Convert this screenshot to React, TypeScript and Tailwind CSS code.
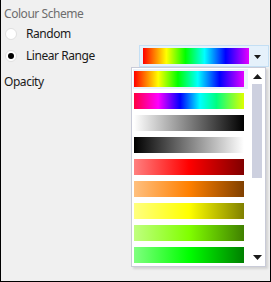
import React from "react";

const gradients: string[] = [
  "linear-gradient(to right, #ff0000 0%, #ffff00 22%, #00ff00 40%, #00ffff 58%, #0000ff 78%, #e600ff 100%)",
  "linear-gradient(to right, #ff0040 0%, #ff00ff 22%, #0000ff 42%, #00ffff 60%, #00ff80 75%, #ddff00 100%)",
  "linear-gradient(to right, #ffffff 0%, #000000 100%)",
  "linear-gradient(to right, #000000 0%, #ffffff 100%)",
  "linear-gradient(to right, #ff8080 0%, #ff0000 50%, #800000 100%)",
  "linear-gradient(to right, #ffc080 0%, #ff8000 50%, #804000 100%)",
  "linear-gradient(to right, #ffff80 0%, #ffff00 50%, #808000 100%)",
  "linear-gradient(to right, #c0ff80 0%, #80ff00 50%, #408000 100%)",
  "linear-gradient(to right, #80ff80 0%, #00ff00 50%, #008000 100%)",
];

function Radio({ checked }: { checked?: boolean }) {
  return (
    <div className="w-[12px] h-[12px] rounded-full bg-white border border-[#e0e0e0] flex items-center justify-center">
      {checked && <div className="w-[6px] h-[6px] rounded-full bg-black" />}
    </div>
  );
}

function TriDown({ w, h }: { w: number; h: number }) {
  return (
    <svg width={w} height={h} viewBox={`0 0 ${w} ${h}`}>
      <polygon points={`0,0 ${w},0 ${w / 2},${h}`} fill="#1a1a1a" />
    </svg>
  );
}
function TriUp({ w, h }: { w: number; h: number }) {
  return (
    <svg width={w} height={h} viewBox={`0 0 ${w} ${h}`}>
      <polygon points={`0,${h} ${w},${h} ${w / 2},0`} fill="#1a1a1a" />
    </svg>
  );
}

export default function App() {
  return (
    <div
      className="relative w-[271px] h-[282px] bg-[#f0f0f0] border-l border-r border-b border-black text-[12px] leading-[16px] tracking-[-0.45px] text-[#1a1a1a]"
      style={{ fontFamily: '"Noto Sans", "Open Sans", sans-serif' }}
    >
      <div className="flex flex-col pt-[6px]">
        <div className="pl-[3px] text-[#6d6d6d]">Colour Scheme</div>
        <div className="h-[22px] mt-[1px] flex items-center pl-[4px] gap-[9px]">
          <Radio />
          <span>Random</span>
        </div>
        <div className="h-[22px] flex items-center justify-between pl-[4px] pr-[1px]">
          <div className="flex items-center gap-[9px]">
            <Radio checked />
            <span>Linear Range</span>
          </div>
          <div className="w-[130px] h-[22px] border border-[#c4dff4] bg-[#e5f1fb] flex items-center pl-[3px] pr-[4px]">
            <div className="w-[106px] h-[16px]" style={{ background: gradients[0] }} />
            <div className="flex-1 flex justify-center pt-[1px] pl-[2px]">
              <TriDown w={7} h={4} />
            </div>
          </div>
        </div>
        <div className="pl-[3px] mt-[7px]">Opacity</div>
      </div>

      <div className="absolute left-[130px] top-[67px] w-[135px] h-[200px] bg-white border border-[#c9cbd8] shadow-[2px_2px_2px_rgba(0,0,0,0.12)] flex">
        <div className="w-[117px] flex flex-col">
          {gradients.map((g, i) => (
            <div
              key={i}
              className={
                "h-[20px] my-[1px] mx-[1px] pl-[1px] flex items-center " +
                (i === 0 ? "bg-[#eaf3fb]" : "")
              }
            >
              <div className="w-[110px] h-[16px]" style={{ background: g }} />
            </div>
          ))}
        </div>
        <div className="flex-1 flex flex-col items-center">
          <div className="h-[16px] flex items-center justify-center pt-[1px]">
            <TriUp w={9} h={5} />
          </div>
          <div className="w-[10px] h-[94px] bg-[#cdd0df]" />
          <div className="flex-1" />
          <div className="h-[17px] flex items-center justify-center">
            <TriDown w={9} h={5} />
          </div>
        </div>
      </div>
    </div>
  );
}
